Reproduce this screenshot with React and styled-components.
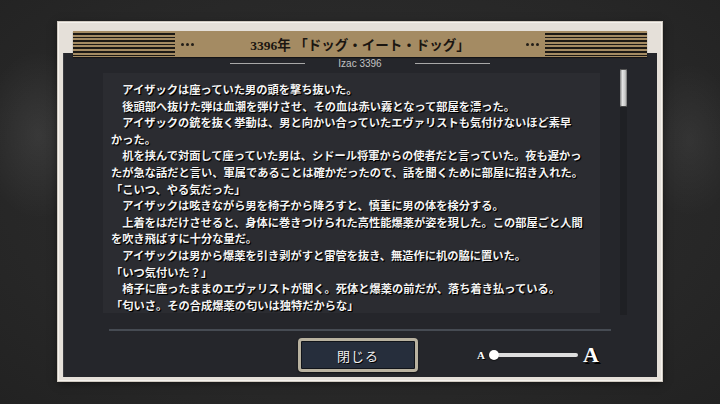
import React from "react";
import styled, { createGlobalStyle } from "styled-components";

const GlobalStyle = createGlobalStyle`
  html, body {
    margin: 0;
    padding: 0;
  }
  body {
    width: 720px;
    height: 404px;
    overflow: hidden;
    background: #292929;
    font-family: "Noto Sans CJK JP", sans-serif;
  }
`;

// keeps a run of kana together so the line breaks before it, like the game's own wrapping
const Keep = styled.span`
  white-space: nowrap;
`;

const story = [
  "　アイザックは座っていた男の頭を撃ち抜いた。",
  "　後頭部へ抜けた弾は血潮を弾けさせ、その血は赤い霧となって部屋を漂った。",
  <>{"　アイザックの銃を抜く挙動は、男と向かい合っていたエヴァリストも気付けないほど素早"}<Keep>かった。</Keep></>,
  "　机を挟んで対面して座っていた男は、シドール将軍からの使者だと言っていた。夜も遅かったが急な話だと言い、軍属であることは確かだったので、話を聞くために部屋に招き入れた。",
  "「こいつ、やる気だった」",
  "　アイザックは呟きながら男を椅子から降ろすと、慎重に男の体を検分する。",
  "　上着をはだけさせると、身体に巻きつけられた高性能爆薬が姿を現した。この部屋ごと人間を吹き飛ばすに十分な量だ。",
  "　アイザックは男から爆薬を引き剥がすと雷管を抜き、無造作に机の脇に置いた。",
  "「いつ気付いた？」",
  "　椅子に座ったままのエヴァリストが聞く。死体と爆薬の前だが、落ち着き払っている。",
  "「匂いさ。その合成爆薬の匂いは独特だからな」",
  "　エヴァリストは溜め息を吐きながら、机に置かれた爆薬を手に取って眺めた。",
];

const Stage = styled.div`
  width: 720px;
  height: 404px;
  box-sizing: border-box;
  padding-top: 22px;
  display: flex;
  justify-content: center;
  align-items: flex-start;
  background:
    radial-gradient(ellipse 80px 120px at 38px 135px, rgba(255, 255, 255, 0.08), transparent 70%),
    radial-gradient(ellipse 70px 110px at 690px 140px, rgba(255, 255, 255, 0.06), transparent 70%),
    radial-gradient(ellipse at 50% 45%, #2f2f2f 0%, #272727 70%, #222 100%);
`;

const Frame = styled.div`
  width: 604px;
  height: 359px;
  box-sizing: border-box;
  padding: 0 5px 4px;
  display: flex;
  flex-direction: column;
  background: #e5e0d9;
  box-shadow: 0 0 0 1px #cfc9c0, inset 0 0 0 1px #f5f2ed, 0 2px 8px rgba(0, 0, 0, 0.5);
`;

const HeaderBar = styled.header`
  position: relative;
  z-index: 1;
  height: 26px;
  margin: 9px 10px -4px;
  display: flex;
  align-items: center;
  background: #a48b63;
  box-shadow: 0 1px 1px rgba(0, 0, 0, 0.45);
`;

const Stripes = styled.div`
  width: 102px;
  align-self: stretch;
  background: repeating-linear-gradient(
    to bottom,
    transparent 0 2px,
    #1c1915 2px 3.6px
  );
`;

const Dots = styled.div`
  display: flex;
  gap: 2px;
  margin: 0 6px;

  span {
    width: 3px;
    height: 3px;
    border-radius: 50%;
    background: #231e18;
  }
`;

const Title = styled.h1`
  flex: 1;
  margin: 0;
  text-align: center;
  font-family: "Liberation Serif", "Noto Sans CJK JP", serif;
  font-size: 13.5px;
  font-weight: 700;
  color: #1b1611;
`;

const Panel = styled.section`
  flex: 1;
  display: flex;
  flex-direction: column;
  padding-top: 4px;
  background: #25262b;
  box-shadow: inset 1px 0 0 #3a3b40;
`;

const Caption = styled.div`
  height: 12px;
  display: flex;
  align-items: center;
  justify-content: center;
  gap: 33px;
  font-family: "Liberation Sans", sans-serif;
  font-size: 10px;
  color: #c2c2c2;

  &::before,
  &::after {
    content: "";
    width: 75px;
    height: 1px;
    background: #a8a8a8;
  }
`;

const Body = styled.div`
  height: 240px;
  margin-top: 4px;
  display: flex;
  padding-left: 40px;
`;

const TextBox = styled.div`
  width: 497px;
  box-sizing: border-box;
  padding: 8px 8px 0;
  overflow: hidden;
  background: #2b2c31;
`;

const Story = styled.div`
  width: 42em;
  font-family: "Noto Sans CJK JP", sans-serif;
  font-size: 11.25px;
  font-weight: 700;
  line-height: 16.6px;
  color: #f4f4f4;
  text-shadow: 1px 1px 1px #000, 1px 1px 0 #000;

  p {
    margin: 0;
  }
`;

const ScrollTrack = styled.div`
  width: 7px;
  height: 246px;
  margin: -4px 0 0 20px;
  background: #1f2024;
`;

const ScrollThumb = styled.div`
  height: 38px;
  border-radius: 1px;
  background: linear-gradient(to right, #7c7c7c, #e4e4e4 35%, #c8c8c8 75%, #6e6e6e);
  box-shadow: inset 0 1px 0 #555, inset 0 -1px 0 #444;
`;

const Divider = styled.div`
  height: 2px;
  margin: 16px 46px 0;
  background: #464b53;
`;

const Footer = styled.div`
  height: 34px;
  margin-top: 7px;
  display: flex;
  align-items: center;
  gap: 59px;
  padding-left: 235px;
`;

const CloseButton = styled.button`
  width: 120px;
  height: 34px;
  box-sizing: border-box;
  border: 3px solid #b9b2a0;
  border-radius: 4px;
  background: #262e3c;
  box-shadow: inset 0 0 0 1px #11141a, 0 1px 2px rgba(0, 0, 0, 0.6);
  color: #efefef;
  font-family: "Noto Sans CJK JP", sans-serif;
  font-size: 13px;
  letter-spacing: 1px;
  text-shadow: 1px 1px 0 #000;
  cursor: pointer;
`;

const Slider = styled.div`
  display: flex;
  align-items: center;
`;

const Glyph = styled.span`
  font-family: "Liberation Serif", serif;
  font-weight: 700;
  font-size: ${(p) => (p.$big ? "22px" : "11px")};
  line-height: 1;
  color: #fff;
  text-shadow: ${(p) => (p.$big ? "2px 2px 0 #000" : "1px 1px 0 #000")};
  margin: ${(p) => (p.$big ? "0 0 0 5px" : "0 4px 0 0")};
`;

const Track = styled.div`
  position: relative;
  width: 84px;
  height: 4px;
  margin-left: 5px;
  border-radius: 2px;
  background: #dedede;
`;

const Knob = styled.div`
  position: absolute;
  left: -5px;
  top: -3px;
  width: 10px;
  height: 10px;
  border-radius: 50%;
  background: #fff;
  box-shadow: 0 1px 1px rgba(0, 0, 0, 0.5);
`;

const HeaderDots = () => (
  <Dots>
    <span />
    <span />
    <span />
  </Dots>
);

const App = () => {
  return (
    <>
      <GlobalStyle />
      <Stage>
        <Frame>
          <HeaderBar>
            <Stripes />
            <HeaderDots />
            <Title>3396年 「ドッグ・イート・ドッグ」</Title>
            <HeaderDots />
            <Stripes />
          </HeaderBar>
          <Panel>
            <Caption>Izac 3396</Caption>
            <Body>
              <TextBox>
                <Story>
                  {story.map((line, i) => (
                    <p key={i}>{line}</p>
                  ))}
                </Story>
              </TextBox>
              <ScrollTrack>
                <ScrollThumb />
              </ScrollTrack>
            </Body>
            <Divider />
            <Footer>
              <CloseButton>閉じる</CloseButton>
              <Slider>
                <Glyph>A</Glyph>
                <Track>
                  <Knob />
                </Track>
                <Glyph $big>A</Glyph>
              </Slider>
            </Footer>
          </Panel>
        </Frame>
      </Stage>
    </>
  );
};

export default App;
